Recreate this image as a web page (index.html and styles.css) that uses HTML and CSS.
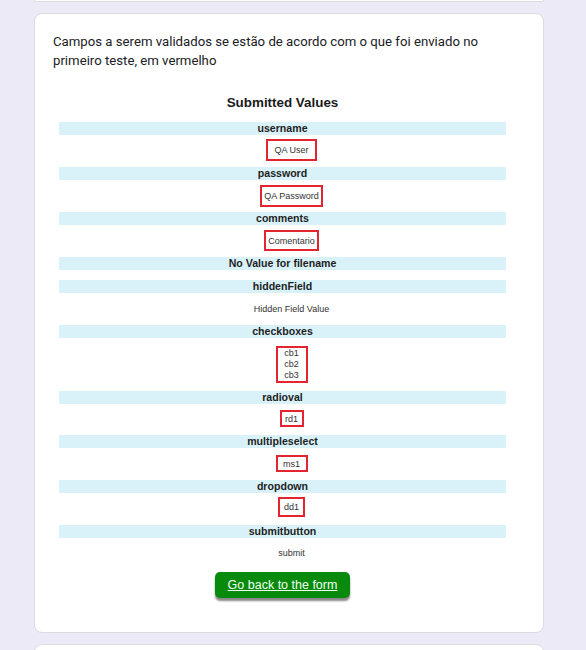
FILE: index.html
```html
<!DOCTYPE html>
<html lang="pt">
<head>
<meta charset="utf-8">
<title>Formulário</title>
<link rel="stylesheet" href="styles.css">
</head>
<body>
<div class="page">
  <div class="card card-prev"></div>
  <div class="card card-main">
    <p class="desc">Campos a serem validados se estão de acordo com o que foi enviado no primeiro teste, em vermelho</p>
    <div class="sheet">
      <h2 class="title">Submitted Values</h2>

      <div class="field">username</div>
      <div class="val v-user"><span class="box b-user">QA User</span></div>

      <div class="field">password</div>
      <div class="val v-pass"><span class="box b-pass">QA Password</span></div>

      <div class="field">comments</div>
      <div class="val v-comm"><span class="box b-comm">Comentario</span></div>

      <div class="field">No Value for filename</div>
      <div class="val v-empty"></div>

      <div class="field">hiddenField</div>
      <div class="val v-text">Hidden Field Value</div>

      <div class="field">checkboxes</div>
      <div class="val v-cb"><span class="box b-cb"><span>cb1</span><span>cb2</span><span>cb3</span></span></div>

      <div class="field">radioval</div>
      <div class="val v-rd"><span class="box b-rd">rd1</span></div>

      <div class="field">multipleselect</div>
      <div class="val v-ms"><span class="box b-ms">ms1</span></div>

      <div class="field">dropdown</div>
      <div class="val v-dd"><span class="box b-dd">dd1</span></div>

      <div class="field">submitbutton</div>
      <div class="val v-submit">submit</div>

      <a class="back-btn" href="#">Go back to the form</a>
    </div>
  </div>
  <div class="card card-next"></div>
</div>
</body>
</html>
```
FILE: styles.css
```css
html, body {
  margin: 0;
  padding: 0;
}
body {
  background: #edeaf7;
  height: 650px;
  overflow: hidden;
}
.page {
  width: 510px;
  margin-left: 34px;
  display: flex;
  flex-direction: column;
  gap: 11px;
}
.card {
  background: #fff;
  border: 1px solid #dadce0;
  border-radius: 8px;
  box-sizing: border-box;
}
.card-prev {
  height: 2px;
  border-top: none;
  border-radius: 0 0 8px 8px;
}
.card-main {
  height: 620px;
  padding: 18px 18px 0 18px;
}
.card-next {
  height: 30px;
}
.desc {
  margin: 0;
  font-family: Roboto, "Open Sans", sans-serif;
  font-size: 13.2px;
  line-height: 19px;
  color: #202124;
}
.sheet {
  margin-left: 6px;
  width: 447px;
  font-family: "Liberation Sans", Arial, sans-serif;
  color: #333;
  display: flex;
  flex-direction: column;
}
.title {
  margin: 25px 0 11px;
  height: 16px;
  line-height: 16px;
  font-size: 13.4px;
  font-weight: bold;
  text-align: center;
  color: #1a1a1a;
}
.field {
  height: 13px;
  line-height: 13px;
  background: #d9f2f9;
  font-size: 10.6px;
  font-weight: bold;
  text-align: center;
  color: #1f1f1f;
}
.val {
  box-sizing: border-box;
  padding-left: 18px;
  display: flex;
  justify-content: center;
  align-items: flex-start;
  font-size: 9px;
}
.box {
  box-sizing: border-box;
  border: 2px solid #e2252f;
  display: flex;
  align-items: center;
  justify-content: center;
  font-size: 9px;
  color: #333;
}
.v-user { height: 32px; padding-top: 4px; }
.v-pass { height: 32px; padding-top: 5px; }
.v-comm { height: 32px; padding-top: 5px; }
.v-empty { height: 10px; }
.v-text { height: 32px; line-height: 32px; }
.v-cb { height: 53px; padding-top: 8px; }
.v-rd { height: 31px; padding-top: 6px; }
.v-ms { height: 32px; padding-top: 7px; }
.v-dd { height: 32px; padding-top: 4px; }
.v-submit { height: 31px; line-height: 30px; }

.b-user { width: 51px; height: 22px; }
.b-pass { width: 63px; height: 22px; }
.b-comm { width: 55px; height: 21px; }
.b-cb {
  width: 32px;
  height: 37px;
  flex-direction: column;
  line-height: 11px;
}
.b-rd { width: 24px; height: 17px; }
.b-ms { width: 32px; height: 17px; }
.b-dd { width: 27px; height: 20px; }

.back-btn {
  display: block;
  margin: 3px auto 0;
  width: 135px;
  height: 26px;
  line-height: 26px;
  background: #088a0c;
  border-radius: 5px;
  box-shadow: 0 3px 2px #8a8a8a;
  color: #f2fff2;
  font-size: 12.5px;
  text-align: center;
  text-decoration: underline;
}
```
